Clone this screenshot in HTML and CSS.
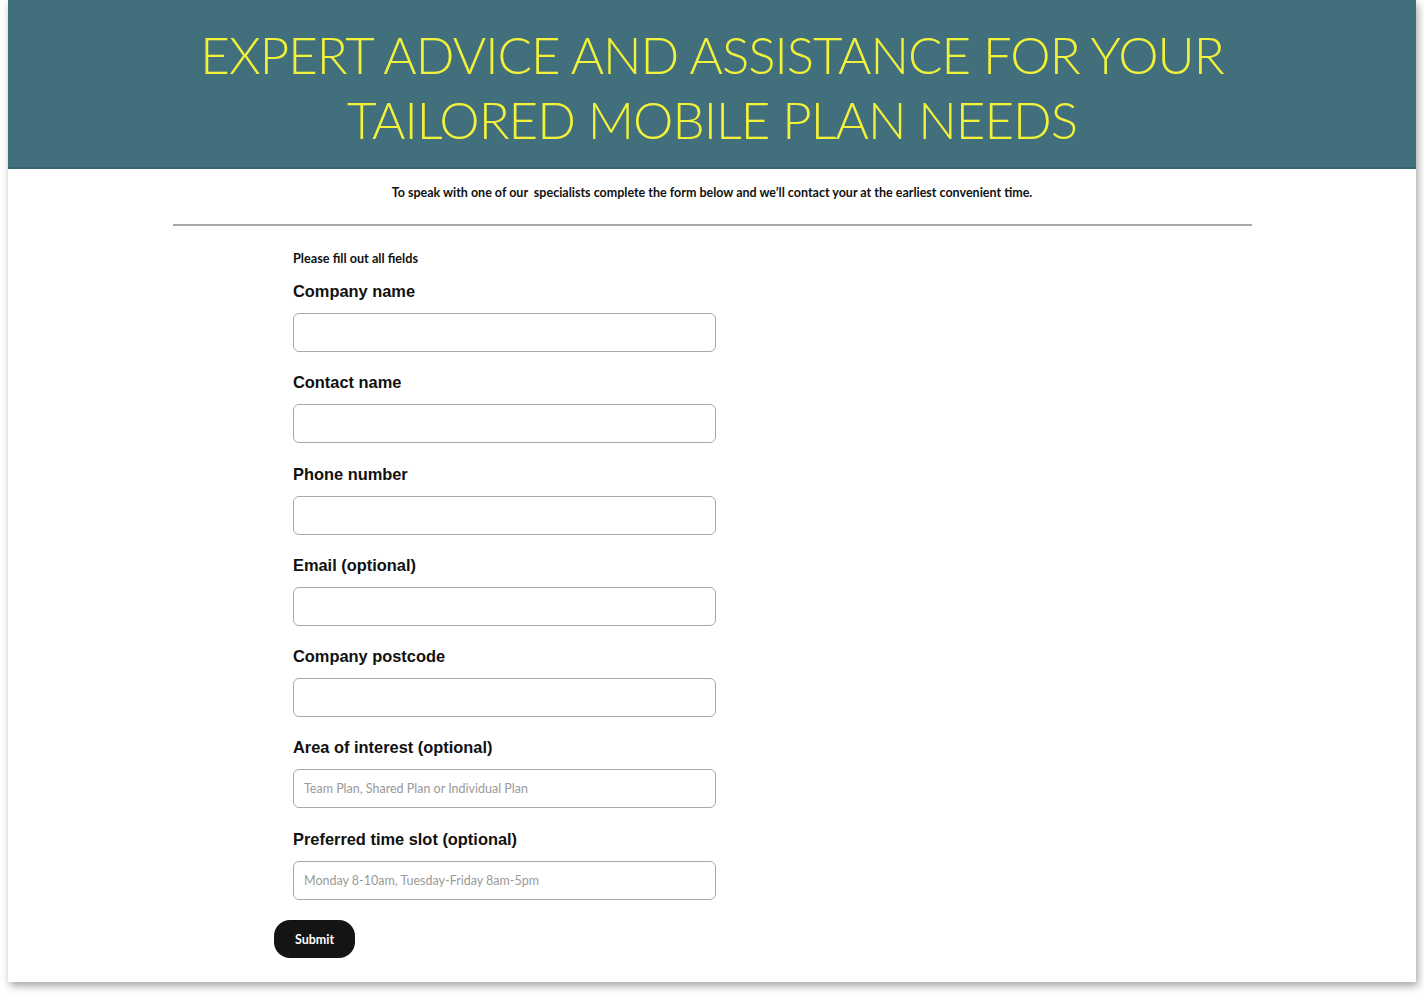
FILE: index.html
```html
<!DOCTYPE html>
<html lang="en">
<head>
<meta charset="utf-8">
<title>Expert advice</title>
<link rel="stylesheet" href="styles.css">
</head>
<body>
<div class="card">
  <header class="hero">
    <h1 class="hero-title">EXPERT ADVICE AND ASSISTANCE FOR YOUR<br>TAILORED MOBILE PLAN NEEDS</h1>
  </header>
  <p class="intro">To speak with one of our &nbsp;specialists complete the form below and we’ll contact your at the earliest convenient time.</p>
  <hr class="divider">
  <form class="form">
    <div class="fields">
      <p class="note">Please fill out all fields</p>
      <label class="field"><span class="label">Company name</span><input class="input" type="text"></label>
      <label class="field"><span class="label">Contact name</span><input class="input" type="text"></label>
      <label class="field"><span class="label">Phone number</span><input class="input" type="text"></label>
      <label class="field"><span class="label">Email (optional)</span><input class="input" type="text"></label>
      <label class="field"><span class="label">Company postcode</span><input class="input" type="text"></label>
      <label class="field"><span class="label">Area of interest (optional)</span><input class="input" type="text" placeholder="Team Plan, Shared Plan or Individual Plan"></label>
      <label class="field"><span class="label">Preferred time slot (optional)</span><input class="input" type="text" placeholder="Monday 8-10am, Tuesday-Friday 8am-5pm"></label>
    </div>
    <button class="submit" type="button">Submit</button>
  </form>
</div>
</body>
</html>
```
FILE: styles.css
```css
html, body {
  margin: 0;
  padding: 0;
  background: #ffffff;
}
body {
  padding: 0 8px 16px;
}
.card {
  background: #ffffff;
  box-shadow: 2px 4px 8px rgba(0, 0, 0, 0.35);
  height: 982px;
  box-sizing: border-box;
}
.hero {
  background: #41707c;
  border-bottom: 2px solid #3a6470;
  height: 169px;
  box-sizing: border-box;
  padding-top: 22px;
}
.hero-title {
  margin: 0;
  text-align: center;
  color: #f2f23a;
  font-family: "Lato", "Noto Sans", sans-serif;
  font-weight: 300;
  font-size: 51px;
  line-height: 65px;
  letter-spacing: -1px;
}
.intro {
  margin: 17px 0 0;
  text-align: center;
  font-family: "Lato", sans-serif;
  font-weight: 700;
  font-size: 12.5px;
  line-height: 14px;
  color: #111;
}
.divider {
  width: 1079px;
  margin: 24px auto 0;
  border: 0;
  border-top: 2px solid #a8a8a8;
  height: 0;
}
.form {
  margin: 24px 0 0 266px;
  display: flex;
  flex-direction: column;
  align-items: flex-start;
}
.fields {
  padding-left: 19px;
  display: flex;
  flex-direction: column;
}
.note {
  margin: 0 0 15px;
  font-family: "Lato", sans-serif;
  font-weight: 700;
  font-size: 12.7px;
  line-height: 16px;
  color: #111;
}
.field {
  display: flex;
  flex-direction: column;
  margin-bottom: 20.3px;
}
.label {
  font-family: "Liberation Sans", Arial, sans-serif;
  font-weight: 700;
  font-size: 16.4px;
  line-height: 20px;
  color: #111;
  margin-bottom: 12px;
}
.input {
  width: 423px;
  height: 39px;
  box-sizing: border-box;
  border: 1px solid #a9a9a9;
  border-radius: 6px;
  padding: 0 10px;
  font-family: "Lato", sans-serif;
  font-size: 12.5px;
  background: #fff;
  margin: 0;
}
.input::placeholder {
  color: #9a9a9a;
}
.submit {
  margin-top: 0;
  width: 81px;
  height: 38px;
  border: 0;
  border-radius: 16px;
  background: #141414;
  color: #fff;
  font-family: "Lato", sans-serif;
  font-weight: 700;
  font-size: 12.5px;
  cursor: pointer;
}
```
